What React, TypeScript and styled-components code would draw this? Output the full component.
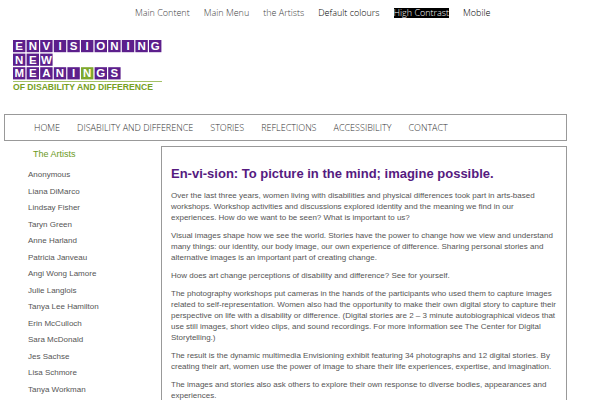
import React from "react";
import styled, { createGlobalStyle } from "styled-components";

const GlobalStyle = createGlobalStyle`
  * { box-sizing: border-box; }
  body {
    margin: 0;
    background: #fff;
    color: #555;
    font: 8px/11px "Liberation Sans", Arial, sans-serif;
  }
  ul { list-style: none; margin: 0; padding: 0; }
  a { color: inherit; text-decoration: none; }
`;

const Page = styled.div`
  padding: 0 33px 0 4px;
`;

const SkipBar = styled.nav`
  display: flex;
  align-items: center;
  gap: 14px;
  padding: 8px 0 0 131px;
  font: 300 9px/10px "Open Sans", sans-serif;
  white-space: nowrap;
`;

const SkipLink = styled.a<{ $tone?: "dark" | "inverse" }>`
  color: ${(p) => (p.$tone === "inverse" ? "#fff" : p.$tone === "dark" ? "#000" : "#444")};
  background: ${(p) => (p.$tone === "inverse" ? "#000" : "transparent")};
`;

const Logo = styled.svg`
  display: block;
  margin: 20px 0 20px 8px;
`;

const MainNav = styled.nav`
  border: 1px solid #999;
  padding: 7px 29px 6px;
  font: 300 9px/12px "Open Sans", sans-serif;
  color: #333;
  ul { display: flex; gap: 17px; white-space: nowrap; }
`;

const Columns = styled.div`
  display: flex;
  align-items: stretch;
  margin-top: 5px;
`;

const Sidebar = styled.aside`
  flex: 0 0 157px;
  padding-left: 24px;
`;

const SideTitle = styled.h2`
  margin: 3px 0 7px 5px;
  font: 9px/11px "Liberation Sans", Arial, sans-serif;
  color: #6b9a1c;
`;

const ArtistList = styled.ul`
  display: flex;
  flex-direction: column;
  justify-content: space-between;
  min-height: 231px;
  line-height: 16px;
`;

const Content = styled.main`
  flex: 1;
  min-width: 0;
  border: 1px solid #999;
  padding: 19px 9px 0;
  p { margin: 0 0 7px; }
`;

const Title = styled.h1`
  margin: 0 0 8px;
  font: bold 13px/16px "Liberation Sans", Arial, sans-serif;
  color: #551a80;
`;

const rows = ["ENVISIONING", "NEW", "MEANINGS"];
const skips: { text: string; tone?: "dark" | "inverse" }[] = [
  { text: "Main Content" },
  { text: "Main Menu" },
  { text: "the Artists" },
  { text: "Default colours", tone: "dark" },
  { text: "High Contrast", tone: "inverse" },
  { text: "Mobile", tone: "dark" },
];
const menu = ["HOME", "DISABILITY AND DIFFERENCE", "STORIES", "REFLECTIONS", "ACCESSIBILITY", "CONTACT"];
const artists = [
  "Anonymous", "Liana DiMarco", "Lindsay Fisher", "Taryn Green", "Anne Harland",
  "Patricia Janveau", "Angi Wong Lamore", "Julie Langlois", "Tanya Lee Hamilton",
  "Erin McCulloch", "Sara McDonald", "Jes Sachse", "Lisa Schmore", "Tanya Workman",
];
const paragraphs = [
  "Over the last three years, women living with disabilities and physical differences took part in arts-based workshops. Workshop activities and discussions explored identity and the meaning we find in our experiences. How do we want to be seen? What is important to us?",
  "Visual images shape how we see the world. Stories have the power to change how we view and understand many things: our identity, our body image, our own experience of difference. Sharing personal stories and alternative images is an important part of creating change.",
  "How does art change perceptions of disability and difference? See for yourself.",
  "The photography workshops put cameras in the hands of the participants who used them to capture images related to self-representation. Women also had the opportunity to make their own digital story to capture their perspective on life with a disability or difference. (Digital stories are 2 – 3 minute autobiographical videos that use still images, short video clips, and sound recordings. For more information see The Center for Digital Storytelling.)",
  "The result is the dynamic multimedia Envisioning exhibit featuring 34 photographs and 12 digital stories. By creating their art, women use the power of image to share their life experiences, expertise, and imagination.",
  "The images and stories also ask others to explore their own response to diverse bodies, appearances and experiences.",
];

function BrandLogo() {
  return (
    <Logo width="152" height="56" viewBox="0 0 152 56" role="img" aria-label="Envisioning New Meanings of Disability and Difference">
      <g fontFamily="Liberation Sans, Arial, sans-serif" fontWeight="bold">
        {rows.map((word, r) =>
          word.split("").map((ch, c) => (
            <g key={`${r}-${c}`} transform={`translate(${1 + c * 13.6} ${2 + r * 13.6})`}>
              <rect width="12.4" height="12.2" fill={r === 2 && c === 5 ? "#7fa82d" : "#5c1f8c"} />
              <text x="6.2" y="10.2" fontSize="11.5" textAnchor="middle" fill="#fff">{ch}</text>
            </g>
          ))
        )}
        <rect x="1" y="43" width="149" height="1" fill="#a3c167" />
        <text x="1" y="52" fontSize="8.6" fill="#76a022">OF DISABILITY AND DIFFERENCE</text>
      </g>
    </Logo>
  );
}

export default function App() {
  return (
    <>
      <GlobalStyle />
      <Page>
        <SkipBar aria-label="Shortcuts">
          {skips.map((s) => (
            <SkipLink key={s.text} href="#" $tone={s.tone}>{s.text}</SkipLink>
          ))}
        </SkipBar>
        <BrandLogo />
        <MainNav aria-label="Main">
          <ul>
            {menu.map((m) => (
              <li key={m}><a href="#">{m}</a></li>
            ))}
          </ul>
        </MainNav>
        <Columns>
          <Sidebar>
            <SideTitle>The Artists</SideTitle>
            <ArtistList>
              {artists.map((a) => (
                <li key={a}><a href="#">{a}</a></li>
              ))}
            </ArtistList>
          </Sidebar>
          <Content>
            <Title>En-vi-sion: To picture in the mind; imagine possible.</Title>
            {paragraphs.map((p) => (
              <p key={p}>{p}</p>
            ))}
          </Content>
        </Columns>
      </Page>
    </>
  );
}
